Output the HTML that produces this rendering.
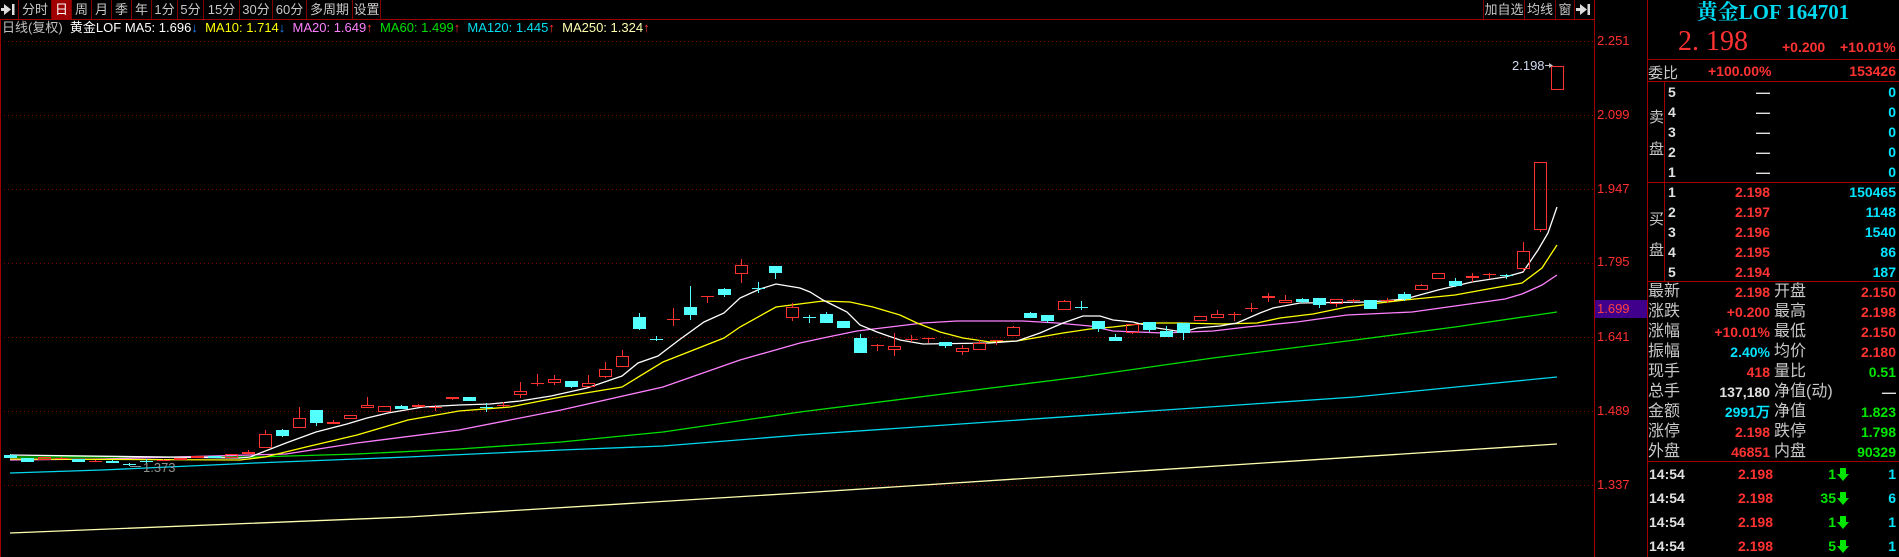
<!DOCTYPE html>
<html><head><meta charset="utf-8">
<style>
*{margin:0;padding:0;box-sizing:border-box}
body{width:1899px;height:557px;background:#000;overflow:hidden;position:relative;font-family:"Liberation Sans","Noto Sans CJK SC",sans-serif;color:#c0c0c0}
.a{position:absolute;white-space:nowrap}
.tb{position:absolute;top:0;height:19px;border-right:1px solid #800000;font-size:13px;line-height:19px;text-align:center;color:#c8c8c8;white-space:nowrap;overflow:hidden}
.r{color:#ff3232}.c{color:#00e4ff}.g{color:#00e600}.w{color:#e0e0e0}
.num{font-family:"Liberation Sans",sans-serif;font-weight:bold;font-size:14px}
.lbl{font-size:15px;color:#c8c8c8}
.rt{text-align:right}
.ax{position:absolute;left:1597px;font-size:13px;color:#ff3030;line-height:14px}
</style></head><body>
<svg id="s" width="1899" height="557" style="position:absolute;left:0;top:0"></svg>

<svg width="19" height="19" style="position:absolute;left:0;top:0"><rect width="19" height="19" fill="#000"/><polygon points="4,4 11,9.5 4,15" fill="#ddd"/><rect x="12" y="4" width="2.5" height="11" fill="#ddd"/><rect x="1" y="8" width="4" height="3" fill="#ddd"/></svg>
<div class="tb" style="left:0;width:19px;background:transparent"></div>
<div class="tb" style="left:19px;width:33px">分时</div>
<div class="tb" style="left:52px;width:20px;background:#a00000;color:#fff">日</div>
<div class="tb" style="left:72px;width:20px">周</div>
<div class="tb" style="left:92px;width:20px">月</div>
<div class="tb" style="left:112px;width:20px">季</div>
<div class="tb" style="left:132px;width:20px">年</div>
<div class="tb" style="left:152px;width:26px">1分</div>
<div class="tb" style="left:178px;width:26px">5分</div>
<div class="tb" style="left:204px;width:36px">15分</div>
<div class="tb" style="left:240px;width:33px">30分</div>
<div class="tb" style="left:273px;width:34px">60分</div>
<div class="tb" style="left:307px;width:46px">多周期</div>
<div class="tb" style="left:353px;width:28px">设置</div>

<div class="tb" style="left:1483px;width:42px;border-left:1px solid #800000">加自选</div>
<div class="tb" style="left:1525px;width:31px">均线</div>
<div class="tb" style="left:1556px;width:19px">窗</div>
<svg width="19" height="19" style="position:absolute;left:1575px;top:0"><polygon points="5,4 12,9.5 5,15" fill="#ddd"/><rect x="12.5" y="4" width="2.5" height="11" fill="#ddd"/><rect x="1" y="8" width="5" height="3" fill="#ddd"/></svg>

<div class="a" style="left:2px;top:20px;font-size:13px;line-height:15px">
<span style="color:#c0c0c0">日线(复权)</span>&nbsp;&nbsp;<span style="color:#fff">黄金LOF</span>&nbsp;<span style="color:#fff">MA5: 1.696</span><span style="color:#2080ff">↓</span>&nbsp;&nbsp;<span style="color:#ffff00">MA10: 1.714</span><span style="color:#2080ff">↓</span>&nbsp;&nbsp;<span style="color:#ff80ff">MA20: 1.649</span><span class="r">↑</span>&nbsp;&nbsp;<span style="color:#00e000">MA60: 1.499</span><span class="r">↑</span>&nbsp;&nbsp;<span style="color:#00e0f0">MA120: 1.445</span><span class="r">↑</span>&nbsp;&nbsp;<span style="color:#ffffb0">MA250: 1.324</span><span class="r">↑</span>
</div>

<div class="ax" style="top:34px">2.251</div>
<div class="ax" style="top:108px">2.099</div>
<div class="ax" style="top:182px">1.947</div>
<div class="ax" style="top:255px">1.795</div>
<div class="a" style="left:1595px;top:300px;width:52px;height:18px;background:#40008c;font-size:13px;line-height:18px;color:#ff4040;padding-left:2px">1.699</div>
<div class="ax" style="top:330px">1.641</div>
<div class="ax" style="top:404px">1.489</div>
<div class="ax" style="top:478px">1.337</div>

<div class="a" style="left:1512px;top:58px;font-size:13px;color:#d0d8f0">2.198</div>
<div class="a" style="left:143px;top:460px;font-size:13px;color:#909090">1.373</div>

<div class="a" style="left:1647px;top:0;width:252px;text-align:center;font-family:'Liberation Serif','Noto Serif CJK SC',serif;font-weight:bold;font-size:21px;line-height:24px;color:#00d8f0">黄金LOF 164701</div>
<div class="a r" style="left:1678px;top:28px;font-family:'Liberation Serif',serif;font-size:28px;line-height:28px">2. 198</div>
<div class="a r num" style="left:1782px;top:39px">+0.200</div>
<div class="a r num" style="left:1840px;top:39px">+10.01%</div>
<div class="a lbl" style="left:1648px;top:62px">委比</div>
<div class="a r num" style="left:1708px;top:63px">+100.00%</div>
<div class="a r num rt" style="right:3px;top:63px">153426</div>

<div id="p"></div>

<script>
const S=document.getElementById('s');let h='';
function L(x1,y1,x2,y2,c,extra){h+=`<line x1="${x1}" y1="${y1}" x2="${x2}" y2="${y2}" stroke="${c}" stroke-width="1" ${extra||''} shape-rendering="crispEdges"/>`;}
L(0,19.5,1594,19.5,'#a00000');
L(0.5,19,0.5,557,'#a00000');
L(1594.5,0,1594.5,557,'#a00000');
L(1647.5,0,1647.5,557,'#a00000');
[59,81,182,281,461].forEach(y=>L(1647,y+.5,1899,y+.5,'#a00000'));
L(1664.5,81,1664.5,281,'#a00000');
[41,115,189,263,337,411,485].forEach(y=>L(0,y+.5,1594,y+.5,'#8a0000','stroke-dasharray="1 3"'));
function P(pts,c,w){h+=`<polyline fill="none" stroke="${c}" stroke-width="${w||1.3}" points="${pts.map(p=>p.join(',')).join(' ')}"/>`;}
P([[10,533],[408,517],[800,493],[1557,444]],'#ffffb0');
P([[10,473],[102,470],[255,463],[408,457],[561,450],[663,446],[800,435],[1355,397],[1557,377]],'#00d8f0');
P([[10,457],[255,457],[357,454],[459,449],[561,442],[663,432],[800,412],[983,389],[1080,377],[1213,358],[1355,340],[1455,327],[1557,312]],'#00e000');
P([[10,460],[102,459],[286,454],[357,443],[459,430],[561,410],[663,387],[740,360],[800,343],[823,338],[857,331],[890,327],[923,323],[957,321],[1023,321],[1057,323],[1090,326],[1113,331],[1163,333],[1213,331],[1247,327],[1297,322],[1347,315],[1412,312],[1455,306],[1505,299],[1522,294],[1542,285],[1557,275]],'#ff80ff');
P([[10,459],[240,460],[265,457],[306,447],[357,435],[408,420],[459,411],[510,407],[561,397],[622,387],[663,362],[724,338],[740,327],[776,307],[823,301],[850,302],[873,307],[900,315],[917,323],[940,332],[963,338],[990,342],[1017,341],[1040,337],[1063,333],[1090,329],[1113,327],[1147,323],[1180,323],[1223,324],[1257,323],[1280,318],[1313,314],[1347,307],[1370,304],[1405,300],[1455,295],[1488,289],[1522,283],[1542,268],[1557,245]],'#ffff00');
P([[10,455],[240,458],[250,457],[286,443],[316,432],[347,424],[367,418],[388,413],[423,407],[459,405],[490,404],[520,401],[551,396],[587,388],[622,376],[638,363],[658,356],[679,340],[704,322],[724,313],[740,298],[760,289],[776,284],[800,288],[810,292],[823,300],[847,312],[860,325],[877,332],[900,340],[923,344],[990,343],[1017,341],[1040,333],[1063,323],[1083,316],[1100,316],[1113,320],[1133,322],[1157,328],[1183,332],[1197,328],[1220,326],[1237,323],[1260,313],[1273,308],[1300,303],[1370,302],[1405,299],[1438,290],[1472,282],[1505,277],[1523,272],[1538,250],[1548,233],[1557,207]],'#ffffff');
const C=[
[455,457,454,458,'c'],[458,461,458,461,'c'],[457,459,457,459,'r'],[458,458,457,459,'r'],[459,461,459,461,'c'],[461,461,460,462,'r'],[461,462,460,463,'c'],[464,464,463,466,'c'],[461,461,459,463,'c'],[460,460,459,461,'r'],
[458,459,458,459,'r'],[456,457,456,457,'r'],[456,457,456,457,'c'],[454,457,454,457,'r'],[452,453,450,453,'r'],[434,447,430,448,'r'],[430,435,429,437,'c'],[418,427,407,428,'r'],[410,422,410,426,'c'],[422,423,420,424,'r'],
[415,418,415,419,'r'],[405,407,397,407,'r'],[406,411,406,412,'r'],[406,408,405,409,'c'],[405,406,404,407,'r'],[407,407,405,411,'r'],[397,398,397,400,'r'],[397,400,397,401,'c'],[407,407,403,412,'c'],[405,405,402,407,'r'],
[391,394,382,398,'r'],[383,383,374,386,'r'],[379,382,375,385,'r'],[381,386,381,388,'c'],[383,386,375,387,'r'],[369,376,362,378,'r'],[356,366,350,367,'r'],[317,328,313,330,'c'],[339,339,336,341,'c'],[319,319,308,326,'r'],
[307,314,286,320,'c'],[296,296,296,303,'r'],[289,294,288,297,'c'],[265,273,259,283,'r'],[288,288,282,293,'c'],[266,272,266,279,'c'],[307,317,303,321,'r'],[317,317,315,323,'c'],[314,322,312,323,'c'],[321,327,321,328,'c'],
[338,352,334,353,'c'],[345,345,344,351,'r'],[346,349,333,356,'r'],[339,339,335,342,'r'],[338,338,338,343,'r'],[342,345,342,348,'c'],[348,351,345,355,'r'],[343,349,340,349,'r'],[340,340,340,345,'r'],[327,335,326,335,'r'],
[313,317,312,318,'c'],[315,320,315,323,'c'],[301,309,300,309,'r'],[307,307,301,310,'c'],[321,328,321,332,'c'],[337,340,334,340,'c'],[324,332,324,334,'r'],[322,329,322,332,'c'],[331,336,326,337,'c'],[323,332,323,340,'c'],
[316,320,316,320,'r'],[314,317,310,317,'r'],[314,314,312,321,'r'],[308,308,303,312,'r'],[296,297,293,302,'r'],[300,302,295,302,'r'],[299,301,298,303,'c'],[298,304,298,308,'c'],[299,303,299,307,'r'],[300,300,299,303,'r'],
[300,308,300,308,'c'],[300,300,298,303,'r'],[294,298,292,301,'c'],[285,289,284,289,'r'],[273,278,273,279,'r'],[281,285,278,287,'c'],[276,277,273,282,'r'],[274,274,273,279,'r'],[275,275,274,279,'c'],[251,268,242,271,'r'],
[162,229,162,232,'r'],[66,89,66,89,'r']];
const N=C.length;
C.forEach((k,i)=>{const x=Math.round(1557-17*(N-1-i));const col=k[4]=='r'?'#ff3232':'#54ffff';
 const [t,b,wt,wb]=k;
 if(wt<t)L(x+.5,wt,x+.5,t,col);
 if(wb>b)L(x+.5,b,x+.5,wb,col);
 if(b-t<1){L(x-6,t+.5,x+7,t+.5,col);}
 else if(k[4]=='r'){h+=`<rect x="${x-5.5}" y="${t+.5}" width="12" height="${b-t}" fill="none" stroke="${col}" stroke-width="1" shape-rendering="crispEdges"/>`;}
 else{h+=`<rect x="${x-6}" y="${t}" width="13" height="${b-t+1}" fill="${col}" shape-rendering="crispEdges"/>`;}
});
L(1545,65.5,1551,65.5,'#c0c0c0');h+='<polygon points="1549,63 1553,65.5 1549,68" fill="#c0c0c0"/>';
L(130,466.5,141,466.5,'#909090');
S.innerHTML=h;

let p='';
function T(x,y,txt,cls,right){p+=`<div class="a ${cls}" style="${right?'right:'+(1899-x)+'px':'left:'+x+'px'};top:${y-9}px;line-height:18px">${txt}</div>`;}
p+=`<div class="a lbl" style="left:1649px;top:106px">卖</div><div class="a lbl" style="left:1649px;top:138px">盘</div>`;
p+=`<div class="a lbl" style="left:1649px;top:208px">买</div><div class="a lbl" style="left:1649px;top:239px">盘</div>`;
[5,4,3,2,1].forEach((n,i)=>{const y=92+i*20;T(1668,y,n,'num w');T(1770,y,'—','num w',1);T(1896,y,'0','num c',1);});
const buy=[['2.198','150465'],['2.197','1148'],['2.196','1540'],['2.195','86'],['2.194','187']];
buy.forEach((b,i)=>{const y=192+i*20;T(1668,y,i+1,'num w');T(1770,y,b[0],'num r',1);T(1896,y,b[1],'num c',1);});
const info=[['最新','2.198','r','开盘','2.150','r'],['涨跌','+0.200','r','最高','2.198','r'],['涨幅','+10.01%','r','最低','2.150','r'],['振幅','2.40%','c','均价','2.180','r'],['现手','418','r','量比','0.51','g'],['总手','137,180','w','净值(动)','—','w'],['金额','2991万','c','净值','1.823','g'],['涨停','2.198','r','跌停','1.798','g'],['外盘','46851','r','内盘','90329','g']];
info.forEach((r,i)=>{const y=292+i*20;p+=`<div class="a lbl" style="left:1648px;top:${y-10}px;line-height:20px;font-size:16px">${r[0]}</div>`;T(1770,y,r[1],'num '+r[2],1);p+=`<div class="a lbl" style="left:1774px;top:${y-10}px;line-height:20px;font-size:16px">${r[3]}</div>`;T(1896,y,r[4],'num '+r[5],1);});
const tr=[['1','1'],['35','6'],['1','1'],['5','1']];
tr.forEach((r,i)=>{const y=474+i*24;T(1649,y,'14:54','num w');T(1773,y,'2.198','num r',1);T(1836,y,r[0],'num g',1);
 p+=`<svg class="a" style="left:1837px;top:${y-6}px" width="12" height="13"><polygon points="3,0 9,0 9,6 12,6 6,13 0,6 3,6" fill="#00e600"/></svg>`;
 T(1896,y,r[1],'num c',1);});
document.getElementById('p').innerHTML=p;
</script>
</body></html>
